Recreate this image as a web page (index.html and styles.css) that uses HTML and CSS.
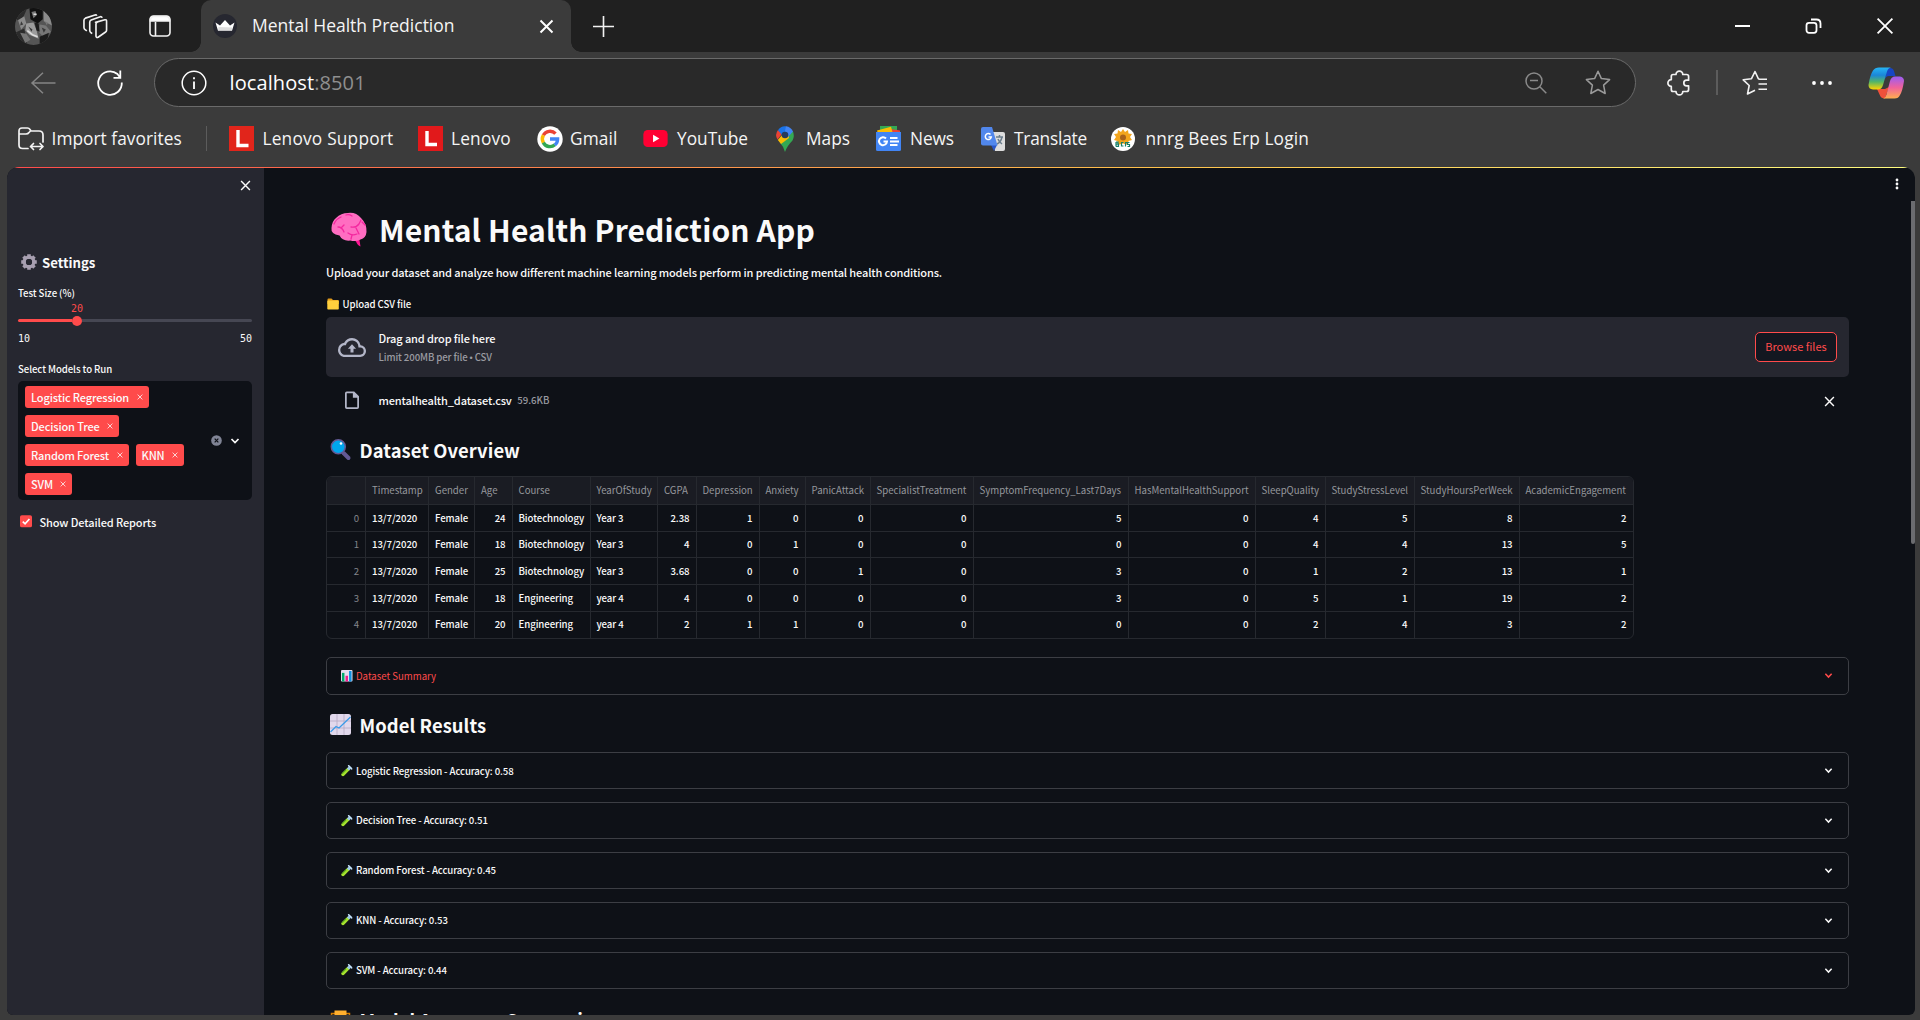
FILE: index.html
```html
<!DOCTYPE html>
<html lang="en">
<head>
<meta charset="utf-8">
<title>Mental Health Prediction</title>
<link rel="stylesheet" href="styles.css">
</head>
<body>
<svg class="defs" aria-hidden="true">
  <defs>
    <symbol id="close" viewBox="0 0 10 10"><path d="M1 1 9 9M9 1 1 9" fill="none" stroke="currentColor" stroke-width="1.3"/></symbol>
    <symbol id="chev" viewBox="0 0 10 8"><path d="M1.5 2 5 5.6 8.500 2" fill="none" stroke="currentColor" stroke-width="1.7"/></symbol>
    <symbol id="tube" viewBox="0 0 12 12"><path d="M2 10 7.600 4.400" stroke="#a6e22e" stroke-width="3.400" stroke-linecap="round"/><path d="M1.500 8.800 5 5.300" stroke="#5fae1e" stroke-width="1.200" stroke-linecap="round"/><path d="M7.300 4.700 9.300 2.700" stroke="#9cc9ee" stroke-width="3.200"/><path d="M8 .8 11.300 4" stroke="#c4e3fb" stroke-width="1.700" stroke-linecap="round"/></symbol>
    <linearGradient id="cpA" x1="0" y1="0" x2="0" y2="1"><stop offset="0" stop-color="#26b5f5"/><stop offset=".35" stop-color="#1b86d8"/><stop offset=".65" stop-color="#52b567"/><stop offset="1" stop-color="#ffd400"/></linearGradient>
    <linearGradient id="cpB" x1="0" y1="0" x2="0" y2="1"><stop offset="0" stop-color="#9a5cf5"/><stop offset=".5" stop-color="#f0629c"/><stop offset="1" stop-color="#ffae4e"/></linearGradient>
    <clipPath id="round"><circle cx="18" cy="18" r="18"/></clipPath>
  </defs>
</svg>

<header class="titlebar">
  <svg class="avatar" viewBox="0 0 36 36"><g clip-path="url(#round)"><path fill="#555" d="M0 0h36v36H0z"/><path fill="#2b2b2b" d="M0 24 9 20 12 36H0zM0 0h12L8 9 2 12z"/><path fill="#111" d="M14 0h13v11l-5 4-7-4z"/><path fill="#8b8b8b" d="M3 12l6-4 2 7-5 6zM28 3l6 6 2 8-8-4z"/><path fill="#9c9c9c" d="M11 15l7-1 3 8 2 8-9-4-4-4z"/><path fill="#777" d="M24 16l6 1 5 6-7 6-5-6z"/><path fill="#1c1c1c" d="M24 28l9-4-2 9-7 3zM19 14l4 1 1 8-3-1z"/><path fill="#777" d="M5 24l6 1 4 6-5 3zM16 4l4-1 1 4-3 3zM29 13l3 1-1 3z"/><path fill="#3a3a3a" d="M13 18l4 3-1 2zM26 19l4 2-2 3zM6 13l2 3-3 1z"/><path fill="none" stroke="#ddd" stroke-width="1.500" d="M12 22l5 4 5 2M18 6h3"/></g></svg>
  <svg class="workspaces" viewBox="0 0 26 26" fill="none" stroke="#f2f2f2" stroke-width="1.700" stroke-linejoin="round"><path d="M13 8.700 22.800 6q1.700-.3 1.700 1.500V17q0 1.200-1 1.700l-7.800 5.500q-1.700.8-2.200-1V10.500q0-1.500 1-1.800z"/><path d="M9.500 20.500 8.200 19.300Q7 18.500 7 17V8.500Q7 7 8.500 6.300L18 2.800q1.500-.3 1.800 1.200M4 17.500l-1.500-1Q1 15.500 1 14V6.500Q1 5 2.500 4.300L12.500 1Q14 .8 14.300 1.800"/></svg>
  <svg class="tabmenu" viewBox="0 0 22 22" fill="none" stroke="#f2f2f2" stroke-width="1.600"><rect x="1" y="1" width="20" height="20" rx="3.500"/><path d="M1.500 5Q1.500 1.500 5 1.500H17Q20.500 1.500 20.500 5V6H1.500z" fill="#fff"/><path d="M6.500 7v14"/></svg>
  <div class="tab">
    <svg class="favicon" viewBox="0 0 24 24"><circle cx="12" cy="12" r="12" fill="#262730"/><path fill="#fff" d="M2.500 8.500 7 11.500 12 6l5 5.500 4.500-3L19 16.800H5z"/><path fill="#bbb" d="M5.500 13 19 13.500 19 16.800H5z" opacity=".5"/></svg>
    <span class="tab-title">Mental Health Prediction</span>
    <svg class="tab-close" viewBox="0 0 10 10"><use href="#close"/></svg>
  </div>
  <svg class="newtab" viewBox="0 0 22 22" stroke="#f2f2f2" stroke-width="1.700"><path d="M11 0v22M0 11h22"/></svg>
  <div class="window-controls">
    <svg width="15" height="16" viewBox="0 0 15 16"><path d="M0 8h15" stroke="#fff" stroke-width="2"/></svg>
    <svg width="17" height="16" viewBox="0 0 17 16" fill="none" stroke="#fff" stroke-width="1.800"><rect x="1.500" y="4.800" width="10" height="10" rx="2.500"/><path d="M6 1.500h5.500q4 0 4 4V10"/></svg>
    <svg width="16" height="16" viewBox="0 0 16 16" stroke="#fff" stroke-width="1.800"><path d="M.6.600l14.800 14.800M15.400.6.600 15.400"/></svg>
  </div>
</header>

<nav class="toolbar">
  <svg class="back" viewBox="0 0 25 22" fill="none" stroke="#858585" stroke-width="1.500"><path d="M24.500 11H1M12 .7 1 11l11 10.300"/></svg>
  <svg class="reload" viewBox="0 0 26 26" fill="none" stroke="#fff" stroke-width="1.800"><path d="M24.800 12.500A11.800 11.800 0 1 1 20.500 4L23 7.500M23.300.500v7.300H16.500"/></svg>
  <div class="address">
    <svg class="info" viewBox="0 0 26 26" fill="none" stroke="#fff" stroke-width="1.500"><circle cx="13" cy="13" r="11.800"/><path d="M13 11.500v7.500M13 7.200v2" stroke-width="1.800"/></svg>
    <span class="url">localhost<span class="port">:8501</span></span>
    <svg class="zoomout" viewBox="0 0 22 22" fill="none" stroke="#8a8a8a" stroke-width="1.500"><circle cx="9" cy="9" r="8"/><path d="M5 8.500h8M14.800 14.800 21.300 21.300"/></svg>
    <svg class="star" viewBox="0 0 26 25" fill="none" stroke="#9a9a9a" stroke-width="1.500" stroke-linejoin="round"><path d="M13 1.200l3.400 7.400 8.200 1-6 5.500 1.600 8.400-7.200-4-7.200 4 1.600-8.400-6-5.500 8.200-1z"/></svg>
  </div>
  <svg class="ext" viewBox="0 0 23 26" fill="none" stroke="#f2f2f2" stroke-width="1.700" stroke-linejoin="round"><path d="M6 4.500h3a3.400 3.400 0 0 1 6.800 0h3.800q2 0 2 2v3.700h-2a2.800 2.800 0 0 0 0 5.600h2v3.700q0 2-2 2h-3.800a3.400 3.400 0 0 1-6.800 0H6q-1.700 0-1.700-2v-3.100a3.400 3.400 0 0 1 0-6.800V6.500q0-2 1.700-2"/></svg>
  <span class="bar"></span>
  <svg class="favs" viewBox="0 0 26 26" fill="none" stroke="#f2f2f2" stroke-width="1.600" stroke-linejoin="round"><path d="M17.500 9.200 16.300 8.600 13 1.500 9.500 8.700 1.200 9.800l6 5.700L5.500 24l7.500-3.700M16.500 9.300H25M16.500 14H25M16.500 19.300H25"/></svg>
  <svg class="more" viewBox="0 0 20 4" fill="#fff"><circle cx="2" cy="2" r="1.900"/><circle cx="10" cy="2" r="1.900"/><circle cx="18" cy="2" r="1.900"/></svg>
  <svg class="copilot" viewBox="0 0 35 32"><path fill="#1745c4" d="M17 1h4q3 0 4 3l1.500 5H20q-3 0-4 3z"/><path fill="#f0503a" d="M8 22h8l4-2-4 11.500q-4 0-5-3z"/><path fill="url(#cpA)" d="M10 .5h12Q19 1 18 4.500L14 18q-1.300 4.500-5 4.500H4Q-.5 22-.5 18 1 8 4 3.500 6 .5 10 .5z"/><path fill="url(#cpB)" d="M25.500 31.500H14q2.500-.5 3.500-4L21 14q1.300-4.500 5-4.500h5q4 .5 4 4.500-1.500 10-4 14-1.500 3.500-5.500 3.500z"/></svg>
</nav>

<div class="bookmarks">
  <svg class="imp" viewBox="0 0 26 24" fill="none" stroke="#f2f2f2" stroke-width="1.700" stroke-linecap="round" stroke-linejoin="round"><path d="M10 21.500H4.500Q1 21.500 1 18V4Q1 1 4 1h5.500q1.500 0 2.500 1.500L13 4h8q4 0 4 4v7M1.500 7H8q2 0 3-1.500l1.500-1.500M12.500 19.500H25M15.500 16.500l-3 3 3 3M22 16.500l3 3-3 3"/></svg>
  <span class="bm bm-import">Import favorites</span>
  <span class="bar"></span>
  <svg class="lenovo lenovo-a" viewBox="0 0 25 25"><path fill="#e1251b" d="M0 0h25v25H0z"/><path stroke="#fff" stroke-width="3.400" fill="none" d="M9 4v15.500h10.500"/></svg>
  <span class="bm bm-support">Lenovo Support</span>
  <svg class="lenovo lenovo-b" viewBox="0 0 25 25"><path fill="#e1191b" d="M0 0h25v25H0z"/><path stroke="#fff" stroke-width="3.400" fill="none" d="M9 5v13.500h10"/></svg>
  <span class="bm bm-lenovo">Lenovo</span>
  <svg class="gmail" viewBox="0 0 26 26" fill="none" stroke-width="3.400"><circle cx="13" cy="13" r="12.700" fill="#fff"/><path stroke="#ea4335" d="M6.300 9.300A7.600 7.600 0 0 1 18.500 7.700"/><path stroke="#fbbc05" d="M6.400 16.800a7.600 7.600 0 0 1 0-7.600"/><path stroke="#34a853" d="M17.900 18.800A7.600 7.600 0 0 1 6.300 16.600"/><path stroke="#4285f4" d="M13 13h7.600q0 3.800-2.800 6"/></svg>
  <span class="bm bm-gmail">Gmail</span>
  <svg class="youtube" viewBox="0 0 25 18"><rect width="25" height="17.500" rx="4.500" fill="#ff0033"/><path fill="#fff" d="M10 5v7.500l6.500-3.700z"/></svg>
  <span class="bm bm-youtube">YouTube</span>
  <svg class="maps" viewBox="0 0 18 26"><path fill="#34a853" d="M9 26Q8 21 4.500 17.500L16.800 5Q19 10 16.500 14.500 11 20 9 26z"/><path fill="#fbbc04" d="M1.800 14 11.500 2.500 13 12 5 18z"/><path fill="#ea4335" d="M2 4 6 8 1.500 13.500Q-1.500 8.500 2 4z"/><path fill="#1a73e8" d="M2 4.200Q5-.3 10 .3L12 5 6 9z"/><path fill="#4285f4" d="M10 .3Q15 1 17 5.500L12 11 9 5z"/><circle cx="9" cy="9" r="3.300" fill="#263b5c"/></svg>
  <span class="bm bm-maps">Maps</span>
  <svg class="news" viewBox="0 0 25 25" fill="none"><path fill="#34a853" d="M4 0h17v7H4z"/><path fill="#ea4335" d="M12 2.500 24 4.500V9H12z"/><path fill="#fbbc04" d="M1 4.500 15 .8 17 8H2z"/><path fill="#4285f4" d="M0 6h25v17.500Q25 25 23.500 25h-22Q0 25 0 23.500z"/><path stroke="#fff" stroke-width="2" d="M10 12.500a4 4 0 1 0 1 3H7.500M14 12h7.500M14 15.500h9M14 19h7.500"/></svg>
  <span class="bm bm-news">News</span>
  <svg class="translate" viewBox="0 0 24 24" fill="none"><path fill="#ddd" d="M10 5h12q2 0 2 2v15q0 2-2 2h-8z"/><path stroke="#6b7d8c" stroke-width="1.500" d="M15 10h7M18.500 8v2M21 10q-1 5-5 7M17 12q1 3 4 5"/><path fill="#2a56c6" d="M10 18h6l-3 6z"/><path fill="#5187ec" d="M2 0h9l5.500 18.500H2q-2 0-2-2V2Q0 0 2 0z"/><path stroke="#fff" stroke-width="1.500" d="M9.500 7.500a3 3 0 1 0 .8 2.500H7.500"/></svg>
  <span class="bm bm-translate">Translate</span>
  <svg class="bees" viewBox="0 0 24 24"><circle cx="12" cy="12" r="12" fill="#fff"/><path fill="#f3a51c" d="M12 2l2 3 3-2 .5 3.500 3.500.5-2 3 2 3-3.500 1L17 18l-5-1.500L7 18l-.5-4L3 13l2-3-2-3 3.500-.5L7 3l3 2z"/><circle cx="12" cy="10.500" r="3" fill="#a8621a"/><path d="M5 15v4.500M5 15.200h2v2H5h2.500v2.200H5M10.500 15v4.500M10.500 15.500h2M10.500 19h2M14.500 15v4.500M14.500 15.500h1.500M18.500 15.500h-2v2h2v2h-2" fill="none" stroke="#17806a" stroke-width="1.200"/></svg>
  <span class="bm bm-nnrg">nnrg Bees Erp Login</span>
</div>

<div class="app">
  <div class="rainbow"></div>
  <aside class="sidebar">
    <div class="side-head"><svg viewBox="0 0 10 10"><use href="#close"/></svg></div>
    <h3 class="settings"><svg viewBox="0 0 16 16"><circle cx="8" cy="8" r="4.800" fill="none" stroke="#a79fb0" stroke-width="3.400"/><path stroke="#a79fb0" stroke-width="3.600" d="M8 .200v3M8 12.800v3M.2 8h3M12.800 8h3M2.500 2.500l2 2M11.500 11.500l2 2M13.500 2.500l-2 2M4.500 11.500l-2 2"/><circle cx="8" cy="8" r="3" fill="#262730"/></svg>Settings</h3>
    <div class="label test-size">Test Size (%)</div>
    <div class="slider-value"><span>20</span></div>
    <div class="slider"><i class="fill"></i><i class="thumb"></i><i class="rest"></i></div>
    <div class="slider-range"><span>10</span><span>50</span></div>
    <div class="label select-label">Select Models to Run</div>
    <div class="multiselect">
      <div class="tags">
        <span class="tag">Logistic Regression<svg viewBox="0 0 10 10"><use href="#close"/></svg></span>
        <span class="tag">Decision Tree<svg viewBox="0 0 10 10"><use href="#close"/></svg></span>
        <span class="tag">Random Forest<svg viewBox="0 0 10 10"><use href="#close"/></svg></span>
        <span class="tag">KNN<svg viewBox="0 0 10 10"><use href="#close"/></svg></span>
        <span class="tag">SVM<svg viewBox="0 0 10 10"><use href="#close"/></svg></span>
      </div>
      <svg class="clear" viewBox="0 0 12 12"><circle cx="6" cy="6" r="5.800" fill="#808495"/><path d="M4 4l4 4M8 4 4 8" stroke="#0e1117" stroke-width="1.300"/></svg>
      <svg class="chev" viewBox="0 0 10 8"><use href="#chev"/></svg>
    </div>
    <div class="check"><svg viewBox="0 0 13 13"><rect width="13" height="13" rx="2" fill="#ff4b4b"/><path d="M3 6.800 5.500 9.200 10.200 4" fill="none" stroke="#fff" stroke-width="1.800"/></svg>Show Detailed Reports</div>
  </aside>

  <main class="main">
    <h1><svg viewBox="0 0 36 34"><path fill="#ff1493" d="M20 25l8-1 1.500 9.500q-3-1-4.500-5z"/><path fill="#ff6dc1" d="M17 0q8-1 13 5 6 6 5.500 14-.5 6-6 7.500-5 2.500-10 1-8 1-11-5Q-.5 21 .5 15 1 8 5 5q5-5 12-5z"/><path fill="none" stroke="#f4289f" stroke-width="1.300" stroke-linecap="round" d="M3 11q2-5 7-7M15 2q3-1 6 1M7 14q4 0 6 5M10 15l3-3M20 14q5 1 8-3l2-4M25 15l3 6M17 20q4 3 9 1M21 22l-1 4M31 9l3 3"/></svg>Mental Health Prediction App</h1>
    <p class="intro">Upload your dataset and analyze how different machine learning models perform in predicting mental health conditions.</p>
    <div class="label upload-label"><svg viewBox="0 0 12 12"><path fill="#e19a1a" d="M.5 1.500Q.5.500 1.500.500h3l1.500 1.500h5q.8 0 .8 1v3H.5z"/><rect x=".3" y="2.600" width="11.500" height="9" rx=".8" fill="#ffcf3d"/></svg>Upload CSV file</div>
    <div class="uploader">
      <svg viewBox="0 0 24 16" preserveAspectRatio="none"><path fill="#b3b6c8" d="M19.350 6.040A7.490 7.490 0 0 0 12 0C9.110 0 6.600 1.640 5.350 4.040A5.994 5.994 0 0 0 0 10c0 3.310 2.690 6 6 6h13c2.760 0 5-2.240 5-5 0-2.640-2.050-4.780-4.650-4.960zM19 14H6c-2.210 0-4-1.790-4-4s1.790-4 4-4h.710a5.500 5.500 0 0 1 10.790 1.500V8H19a3 3 0 0 1 0 6zM8.500 9h2.200v3.200h2.600V9h2.200L12 5.300z"/></svg>
      <div class="drop-text"><span>Drag and drop file here</span><small>Limit 200MB per file <b>•</b> CSV</small></div>
      <button>Browse files</button>
    </div>
    <div class="file">
      <svg class="doc" viewBox="0 0 16 20"><path fill="#b3b6c8" fill-rule="evenodd" d="M2 0h8.500L16 5.500V18q0 2-2 2H2q-2 0-2-2V2Q0 0 2 0zM2 2v16h12V7H9V2z"/></svg>
      <span class="file-name">mentalhealth_dataset.csv</span><span class="file-size">59.6KB</span>
      <svg class="remove" viewBox="0 0 10 10"><use href="#close"/></svg>
    </div>
    <h2 class="overview"><svg viewBox="0 0 21 21"><path d="M13.500 14 18.500 19" stroke="#635994" stroke-width="4" stroke-linecap="round"/><circle cx="8.300" cy="7.800" r="7" fill="#00a6ed" stroke="#635994" stroke-width="1.500"/><circle cx="11" cy="4.500" r="1.300" fill="#fff"/></svg>Dataset Overview</h2>
    <table class="grid">
      <thead><tr><th></th><th>Timestamp</th><th>Gender</th><th>Age</th><th>Course</th><th>YearOfStudy</th><th>CGPA</th><th>Depression</th><th>Anxiety</th><th>PanicAttack</th><th>SpecialistTreatment</th><th>SymptomFrequency_Last7Days</th><th>HasMentalHealthSupport</th><th>SleepQuality</th><th>StudyStressLevel</th><th>StudyHoursPerWeek</th><th>AcademicEngagement</th></tr></thead>
      <tbody>
        <tr><td>0</td><td class="t">13/7/2020</td><td class="t">Female</td><td>24</td><td class="t">Biotechnology</td><td class="t">Year 3</td><td>2.38</td><td>1</td><td>0</td><td>0</td><td>0</td><td>5</td><td>0</td><td>4</td><td>5</td><td>8</td><td>2</td></tr>
        <tr><td>1</td><td class="t">13/7/2020</td><td class="t">Female</td><td>18</td><td class="t">Biotechnology</td><td class="t">Year 3</td><td>4</td><td>0</td><td>1</td><td>0</td><td>0</td><td>0</td><td>0</td><td>4</td><td>4</td><td>13</td><td>5</td></tr>
        <tr><td>2</td><td class="t">13/7/2020</td><td class="t">Female</td><td>25</td><td class="t">Biotechnology</td><td class="t">Year 3</td><td>3.68</td><td>0</td><td>0</td><td>1</td><td>0</td><td>3</td><td>0</td><td>1</td><td>2</td><td>13</td><td>1</td></tr>
        <tr><td>3</td><td class="t">13/7/2020</td><td class="t">Female</td><td>18</td><td class="t">Engineering</td><td class="t">year 4</td><td>4</td><td>0</td><td>0</td><td>0</td><td>0</td><td>3</td><td>0</td><td>5</td><td>1</td><td>19</td><td>2</td></tr>
        <tr><td>4</td><td class="t">13/7/2020</td><td class="t">Female</td><td>20</td><td class="t">Engineering</td><td class="t">year 4</td><td>2</td><td>1</td><td>1</td><td>0</td><td>0</td><td>0</td><td>0</td><td>2</td><td>4</td><td>3</td><td>2</td></tr>
      </tbody>
    </table>
    <div class="expander summary"><svg class="ico" viewBox="0 0 12 12"><rect width="12" height="12" rx="1" fill="#e3dced"/><path fill="#00a86b" d="M1 3h2.600v9H1z"/><path fill="#ef1d8c" d="M4.700 6h2.600v6H4.700z"/><path fill="#0f8fe0" d="M8.400 1H11v11H8.400z"/></svg><span>Dataset Summary</span><svg class="chev" viewBox="0 0 10 8"><use href="#chev"/></svg></div>
    <h2 class="results"><svg viewBox="0 0 21 21"><rect width="21" height="21" rx="2.500" fill="#e1d8ec"/><path stroke="#b4a9c4" stroke-width=".8" d="M7 0v21M14 0v21M0 7h21M0 14h21"/><path d="M.5 18 6 12.500l3 1.500L20.500 3" fill="none" stroke="#3a9be8" stroke-width="1.300"/></svg>Model Results</h2>
    <div class="models">
      <div class="expander"><svg class="ico" viewBox="0 0 12 12"><use href="#tube"/></svg><span>Logistic Regression - Accuracy: 0.58</span><svg class="chev" viewBox="0 0 10 8"><use href="#chev"/></svg></div>
      <div class="expander"><svg class="ico" viewBox="0 0 12 12"><use href="#tube"/></svg><span>Decision Tree - Accuracy: 0.51</span><svg class="chev" viewBox="0 0 10 8"><use href="#chev"/></svg></div>
      <div class="expander"><svg class="ico" viewBox="0 0 12 12"><use href="#tube"/></svg><span>Random Forest - Accuracy: 0.45</span><svg class="chev" viewBox="0 0 10 8"><use href="#chev"/></svg></div>
      <div class="expander"><svg class="ico" viewBox="0 0 12 12"><use href="#tube"/></svg><span>KNN - Accuracy: 0.53</span><svg class="chev" viewBox="0 0 10 8"><use href="#chev"/></svg></div>
      <div class="expander"><svg class="ico" viewBox="0 0 12 12"><use href="#tube"/></svg><span>SVM - Accuracy: 0.44</span><svg class="chev" viewBox="0 0 10 8"><use href="#chev"/></svg></div>
    </div>
    <h2 class="comparison"><svg viewBox="0 0 21 21"><path d="M5 3.500H1.500V7q0 3 4 3M16 3.500h3.500V7q0 3-4 3" fill="none" stroke="#d67d00" stroke-width="1.500"/><path fill="#ffb02e" d="M4.500.5h12V8q0 6-6 6t-6-6z"/><path fill="#6d4534" d="M6 16h9v4H6z"/></svg>Model Accuracy Comparison</h2>
  </main>
  <svg class="kebab" viewBox="0 0 4 12" fill="#fafafa"><circle cx="2" cy="2" r="1.400"/><circle cx="2" cy="6" r="1.400"/><circle cx="2" cy="10" r="1.400"/></svg>
  <i class="scrollbar"></i>
</div>
</body>
</html>
```
FILE: styles.css
```css
* { box-sizing: border-box; }
body {
  margin: 0;
  width: 1920px;
  height: 1020px;
  overflow: hidden;
  background: #3b3b3b;
  color: #fafafa;
  font-family: "Noto Sans CJK SC", sans-serif;
}
.defs { position: absolute; width: 0; height: 0; }
svg { display: block; flex: none; overflow: visible; }
h1, h2, h3, p { margin: 0; }
i { display: block; }

/* window title bar */
.titlebar {
  display: flex;
  align-items: center;
  height: 52px;
  background: #202020;
  font-family: "Open Sans", sans-serif;
}
.avatar { width: 37px; height: 37px; margin-left: 15px; }
.workspaces { width: 25px; height: 25px; margin-left: 31px; }
.tabmenu { width: 22px; height: 22px; margin-left: 41px; }
.tab {
  position: relative;
  display: flex;
  align-items: center;
  align-self: stretch;
  width: 370px;
  margin-left: 30px;
  padding: 0 17px 0 12px;
  border-radius: 10px 10px 0 0;
  background: #3b3b3b;
}
.tab::before, .tab::after {
  content: "";
  position: absolute;
  bottom: 0;
  width: 10px;
  height: 10px;
}
.tab::before { left: -10px; background: radial-gradient(circle at 0 0, #202020 9.500px, #3b3b3b 10px); }
.tab::after { right: -10px; background: radial-gradient(circle at 100% 0, #202020 9.500px, #3b3b3b 10px); }
.favicon { width: 24px; height: 24px; }
.tab-title { margin: -2px 0 0 15px; font-size: 17.500px; letter-spacing: 0; color: #f5f5f5; white-space: nowrap; }
.tab-close { width: 15px; height: 15px; margin-left: auto; color: #fff; }
.newtab { width: 21px; height: 21px; margin-left: 22px; }
.window-controls { display: flex; align-items: center; gap: 55px; margin: 0 27px 0 auto; }

/* address row */
.toolbar { display: flex; align-items: center; height: 61px; font-family: "Open Sans", sans-serif; }
.back { width: 25px; height: 22px; margin-left: 31px; }
.reload { width: 26px; height: 26px; margin-left: 41px; }
.address {
  display: flex;
  align-items: center;
  width: 1482px;
  height: 49px;
  margin-left: 31px;
  padding: 0 24px 0 26px;
  border: 1.500px solid #6a6a6a;
  border-radius: 25px;
  background: #292929;
}
.info { width: 26px; height: 26px; }
.url { margin-left: 22.500px; font-size: 20px; letter-spacing: .1px; color: #fff; }
.port { color: #8f8f8f; }
.zoomout { width: 22px; height: 22px; margin-left: auto; }
.star { width: 26px; height: 25px; margin-left: 38px; }
.ext { width: 23px; height: 26px; margin-left: 31px; }
.bar { width: 1.500px; height: 25px; background: #5c5c5c; }
.toolbar .bar { margin-left: 26px; }
.favs { width: 26px; height: 26px; margin-left: 24px; }
.more { width: 20px; height: 4px; margin-left: 44px; }
.copilot { width: 35px; height: 32px; margin-left: 37px; }

/* favorites row */
.bookmarks {
  display: flex;
  align-items: center;
  height: 51px;
  color: #f5f5f5;
  font: 17.300px/24px "Open Sans", sans-serif;
  white-space: nowrap;
}
.imp { width: 26px; height: 24px; margin-left: 18px; }
.bm-import { width: 154px; margin-left: 7.500px; letter-spacing: .05px; }
.lenovo { width: 25px; height: 25px; }
.lenovo-a { margin-left: 22px; }
.bm-support { width: 155px; margin-left: 8.500px; letter-spacing: .2px; }
.bm-lenovo { width: 86px; margin-left: 8.500px; letter-spacing: .2px; }
.gmail { width: 26px; height: 26px; }
.bm-gmail { width: 73px; margin-left: 7px; letter-spacing: .1px; }
.youtube { width: 25px; height: 17.500px; }
.bm-youtube { width: 99px; margin-left: 9px; }
.maps { width: 18px; height: 26px; }
.bm-maps { width: 70px; margin-left: 12px; }
.news { width: 25px; height: 25px; }
.bm-news { width: 71px; margin-left: 9px; letter-spacing: -.1px; }
.translate { width: 24px; height: 24px; }
.bm-translate { width: 97px; margin-left: 9px; letter-spacing: -.2px; }
.bees { width: 24px; height: 24px; }
.bm-nnrg { margin-left: 10.500px; letter-spacing: .13px; }

/* page frame */
.app {
  position: relative;
  display: flex;
  width: 1908px;
  height: 848px;
  margin: 3px 0 0 7px;
  border-radius: 12px 12px 6px 6px;
  background: #0e1117;
  overflow: hidden;
}
.rainbow {
  position: absolute;
  inset: 0 0 auto 0;
  height: 1px;
  background: linear-gradient(90deg, #ff4b4b, #ffc24b 60%, #fffd80);
}
.kebab { position: absolute; right: 16px; top: 11px; width: 4px; height: 12px; }
.scrollbar { position: absolute; right: 0; top: 34px; width: 4px; height: 343px; background: #6b6c70; border-radius: 0 0 2px 2px; }

/* sidebar */
.sidebar { width: 257px; padding: 1px 12px 0 11px; background: #262730; }
.side-head { display: flex; justify-content: flex-end; align-items: center; height: 35px; padding-right: 1px; }
.side-head svg { width: 11px; height: 11px; }
.settings {
  display: flex;
  align-items: center;
  gap: 5px;
  height: 24px;
  margin-top: 47px;
  padding-left: 3px;
  font-size: 13.200px;
  font-weight: 600;
}
.settings svg { width: 16px; height: 16px; }
.label { font-size: 9.650px; font-weight: 500; white-space: nowrap; letter-spacing: -.07px; }
.test-size { height: 14px; margin-top: 12px; line-height: 14px; }
.slider-value {
  height: 13px;
  margin-top: 2px;
  padding-left: 53px;
  color: #ff4b4b;
  font: 10px/13px "DejaVu Sans Mono", monospace;
}
.slider { display: flex; align-items: center; height: 11px; margin-top: 0; }
.fill { width: 54px; height: 3px; background: #ff4b4b; border-radius: 2px 0 0 2px; }
.thumb { width: 10px; height: 10px; background: #ff4b4b; border-radius: 50%; }
.rest { flex: 1; height: 3px; background: #464753; border-radius: 0 2px 2px 0; }
.slider-range {
  display: flex;
  justify-content: space-between;
  height: 13px;
  margin-top: 6px;
  font: 10px/13px "DejaVu Sans Mono", monospace;
}
.select-label { height: 14px; margin-top: 17px; line-height: 14px; }
.multiselect {
  display: flex;
  align-items: center;
  height: 119px;
  margin-top: 5px;
  padding: 0 12px 0 7px;
  border-radius: 5px;
  background: #0e1117;
}
.tags { display: flex; flex-wrap: wrap; gap: 7.500px 7px; width: 185px; }
.tag {
  display: flex;
  align-items: center;
  gap: 7.500px;
  height: 21.700px;
  padding: 0 6px;
  border-radius: 3px;
  background: #ff4b4b;
  font-size: 11px;
  font-weight: 500;
  letter-spacing: -.13px;
  white-space: nowrap;
}
.tag svg { width: 6px; height: 6px; }
.clear { width: 11px; height: 11px; margin-left: 1px; }
.multiselect .chev { width: 10px; height: 8px; margin-left: auto; }
.check {
  display: flex;
  align-items: center;
  gap: 7.500px;
  height: 16px;
  margin-top: 13.500px;
  padding-left: 2px;
  font-size: 11px;
  font-weight: 500;
  letter-spacing: -.12px;
}
.check svg { width: 12px; height: 12.500px; }

/* main column */
.main { flex: 1; padding: 40px 66px 0 62px; }
h1 { display: flex; align-items: center; height: 44px; padding-left: 5px; font-size: 30px; font-weight: 700; letter-spacing: .13px; }
h1 svg { width: 36px; height: 34px; margin: 2px 12px 0 0; }
.intro { height: 21px; margin-top: 11px; font-size: 11px; font-weight: 500; letter-spacing: -.13px; line-height: 21px; }
.upload-label { display: flex; align-items: center; gap: 3.500px; height: 16px; margin-top: 13px; padding-left: 1px; }
.upload-label svg { width: 12px; height: 12px; }
.uploader {
  display: flex;
  align-items: center;
  height: 60px;
  margin-top: 5px;
  padding: 0 12px;
  border-radius: 5px;
  background: #262730;
}
.uploader svg { width: 28px; height: 19px; }
.drop-text { display: flex; flex-direction: column; margin-left: 12.500px; }
.drop-text span { font-size: 11px; font-weight: 500; letter-spacing: -.13px; line-height: 20px; }
.drop-text small { color: #9a9ba1; font-size: 9.650px; font-weight: 500; line-height: 18px; letter-spacing: -.1px; }
.drop-text b { font: 9px "Liberation Sans", sans-serif; }
button {
  width: 82px;
  height: 30px;
  margin-left: auto;
  padding: 0 0 2px;
  border: 1px solid #ff4b4b;
  border-radius: 5px;
  background: #131720;
  color: #ff4b4b;
  font: 11px "Noto Sans CJK SC", sans-serif;
}
.file { display: flex; align-items: center; height: 27px; margin-top: 10px; padding: 0 14px 0 18px; }
.doc { width: 14px; height: 18.500px; margin-left: 1px; }
.file-name { margin: -1px 0 0 19.500px; font-size: 11px; font-weight: 500; letter-spacing: -.13px; }
.file-size { margin: -1px 0 0 5.500px; color: #9a9ba1; font-size: 9.650px; font-weight: 500; }
.remove { width: 11px; height: 11px; margin: 1px 0 0 auto; }
h2 {
  display: flex;
  align-items: center;
  gap: 8.500px;
  height: 27px;
  padding-left: 4px;
  font-size: 18.400px;
  font-weight: 700;
  letter-spacing: .06px;
  white-space: nowrap;
}
h2 svg { width: 21px; height: 21px; }
.overview { margin-top: 22px; }
.results { margin-top: 16px; }
.comparison { margin-top: 18px; }

/* data grid */
.grid { display: block; width: 1308px; margin-top: 13px; border: 1px solid #26292f; border-radius: 6px; overflow: hidden; }
.grid thead, .grid tbody { display: block; }
.grid tr {
  display: grid;
  grid-template-columns: 39px 63px 46px 37.500px 78px 67.500px 38.500px 63px 46px 65px 103px 155px 127px 70px 89px 105px 113px;
  height: 26.700px;
}
.grid thead tr { height: 27.600px; background: #1a1c23; }
.grid th, .grid td {
  padding: 0 6px;
  border: solid #26292f;
  border-width: 0 1px 1px 0;
  font-size: 9.630px;
  font-weight: 400;
  line-height: 26px;
  text-align: right;
  white-space: nowrap;
}
.grid td { font-weight: 500; letter-spacing: -.07px; }
.grid th, .grid .t { text-align: left; }
.grid th { color: #96989d; line-height: 26.500px; }
.grid td:first-child { color: #83858b; font-weight: 400; }
.grid th:last-child, .grid td:last-child { border-right: 0; }
.grid tbody tr:last-child td { border-bottom: 0; }

/* collapsible rows */
.expander {
  display: flex;
  align-items: center;
  height: 37px;
  padding: 0 15px 0 14px;
  border: 1px solid #3c3e44;
  border-radius: 5px;
  font-size: 9.650px;
  font-weight: 500;
  letter-spacing: -.1px;
}
.expander .ico { width: 11.500px; height: 11.500px; margin-right: 3.500px; }
.expander .chev { width: 9px; height: 7.200px; margin-left: auto; }
.summary { height: 38px; margin-top: 18px; color: #ff4b4b; font-weight: 400; letter-spacing: 0; }
.models { display: flex; flex-direction: column; gap: 12.900px; margin-top: 14px; }
```
